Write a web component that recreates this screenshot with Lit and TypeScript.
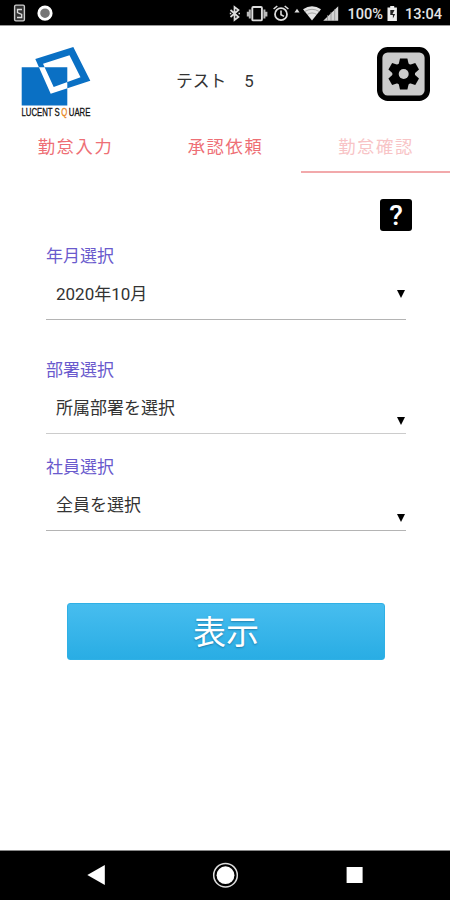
import { LitElement, html, svg, css } from "lit";
import { customElement, property } from "lit/decorators.js";

@customElement("status-bar")
class StatusBar extends LitElement {
  static styles = css`
    :host { display: flex; height: 25px; background: #000; color: #e8e8e8; border-bottom: 1px solid #999; box-sizing: content-box; flex: none; }
    svg { display: block; width: 450px; height: 25px; }
    text { font-family: Roboto, sans-serif; font-size: 15.2px; font-weight: 500; fill: #e4e4e4; }
  `;
  render() {
    return html`<svg viewBox="0 0 450 25">
      <rect x="14.6" y="5.1" width="9.8" height="15.8" rx="1.3" fill="#333" stroke="#ccc" stroke-width="1.4" />
      <path d="M22 9.5h-4.5v3l4.2 2v3H17" fill="none" stroke="#ddd" stroke-width="1.3" />
      <circle cx="45" cy="13.2" r="6.2" fill="#777" stroke="#fff" stroke-width="2.8" />
      <path d="M230.5 10l8 7-4 3V7l4 3-8 7M229.8 13.5h1.5M238.5 13.5h1.5" fill="none" stroke="#ddd" stroke-width="1.7" />
      <rect x="252.3" y="7" width="9.6" height="13.4" rx="1" fill="#000" stroke="#ddd" stroke-width="1.9" />
      <path d="M249.8 9.5v9M264.4 9.5v9M247.8 11.8v4.6M266.4 11.8v4.6" stroke="#bbb" stroke-width="2" />
      <circle cx="281" cy="14.2" r="6" fill="none" stroke="#ddd" stroke-width="1.8" />
      <path d="M281 10.5v4.2l3 1.7M273.6 9l3.7-3M288.4 9l-3.7-3" fill="none" stroke="#ddd" stroke-width="1.6" />
      <path d="M297 8.8l2.6 3.6h-5.2z" fill="#ddd" />
      <path d="M303 9.2Q312 3.4 321 9.2L312 20.6z" fill="#e4e4e4" />
      <path d="M304.6 11.6Q312 7 319.4 11.6M307 14.6Q312 11.3 317 14.6" fill="none" stroke="#888" stroke-width=".7" />
      <path d="M338.2 6.2v14.6h-15z" fill="#d4d4d4" />
      <path d="M327.5 15v6M331 12v9M334.7 9v12" stroke="#888" stroke-width=".7" />
      <text x="347.5" y="19.4" textLength="35.5" lengthAdjust="spacingAndGlyphs">100%</text>
      <path d="M387.5 7.6h2.7V6h4v1.6h2.7V21h-9.4z" fill="#eee" />
      <path d="M394.5 10h-4.2v5h2.6v3.4l2.2-4.4h-2.6z" fill="#222" />
      <text x="405" y="19.4" textLength="37" lengthAdjust="spacingAndGlyphs">13:04</text>
    </svg>`;
  }
}

@customElement("app-header")
class AppHeader extends LitElement {
  static styles = css`
    :host { display: flex; height: 95px; flex: none; align-items: flex-start; justify-content: space-between; padding: 0 20px 0 10px; box-sizing: border-box; }
    .logo { width: 100px; height: 85px; margin-top: 14px; display: block; }
    .name { font: 400 10.8px "Liberation Sans", sans-serif; fill: #111; stroke: #111; stroke-width: .3; }
    .accent { fill: #e8861c; stroke: #e8861c; }
    .title { flex: 1; margin: 41px 0 0 66px; font-size: 16.8px; line-height: 28px; color: #333; white-space: pre; }
    .title span { margin-left: 1px; }
    .gear { width: 53px; height: 54px; margin-top: 21px; display: block; }
  `;
  render() {
    return html`
      <svg class="logo" viewBox="0 0 100 85">
        <path fill="#0a70c4" fill-rule="evenodd"
          d="M11.7 27.3H57.3V65.6H11.7ZM25.3 19L63.3 7L80.3 40.7L40.7 53.7ZM33 23.8L59.5 15.2L70.5 37.3L43.7 47Z" />
        <text class="name" transform="translate(11.5 75.7) scale(.72 1)">LUCENT S</text>
        <text class="name accent" transform="translate(51.3 75.7) scale(.72 1)">Q</text>
        <text class="name" transform="translate(58.8 75.7) scale(.72 1)">UARE</text>
      </svg>
      <div class="title">テスト　<span>5</span></div>
      <svg class="gear" viewBox="0 0 53 54">
        <rect x="2.7" y="2.7" width="47.6" height="48.6" rx="8" fill="#cbcbcb" stroke="#000" stroke-width="5.4" />
        <g transform="translate(26.7 27)">
          ${[0, 60, 120].map((a) => svg`<path d="M-3.7 -15.5h7.4l1.6 7v17l-1.6 7h-7.4l-1.6-7v-17z" transform="rotate(${a})" />`)}
          <circle r="11.3" /><circle r="5" fill="#cbcbcb" />
        </g>
      </svg>`;
  }
}

@customElement("tab-strip")
class TabStrip extends LitElement {
  static styles = css`
    :host { display: grid; grid-template-columns: repeat(3, 1fr); height: 52px; flex: none; }
    .tab { text-align: center; font-size: 17.3px; letter-spacing: 1.6px; line-height: 28px; padding-top: 12px; padding-left: 1px; font-weight: 400; color: #ee6f75; box-sizing: border-box; border-bottom: 2px solid transparent; }
    .current { color: #f8c4c6; border-color: #f2a9ab; margin-left: 1px; padding-left: 1px; }
  `;
  render() {
    return html`${["勤怠入力", "承認依頼", "勤怠確認"].map((t, i) => html`<div class="tab ${i === 2 ? "current" : ""}">${t}</div>`)}`;
  }
}

@customElement("select-field")
class SelectField extends LitElement {
  @property() label = "";
  @property() value = "";
  static styles = css`
    :host { display: grid; grid-template-rows: 26px 1fr; box-sizing: border-box; border-bottom: 1px solid #b4b4b4; }
    .label { color: #6a5acd; font-size: 17px; line-height: 26px; }
    .row { display: flex; justify-content: space-between; padding: 12px 0 0 10px; }
    .value { color: #333; font-size: 17px; line-height: 26px; }
    .arrow { width: 9px; height: 8px; margin-top: 9px; }
    :host([low]) .arrow { margin-top: 22px; }
  `;
  render() {
    return html`<div class="label">${this.label}</div>
      <div class="row"><span class="value">${this.value}</span>
        <svg class="arrow" viewBox="0 0 9 8"><path d="M0 0h8L4 8z" /></svg></div>`;
  }
}

@customElement("nav-bar")
class NavBar extends LitElement {
  static styles = css`
    :host { display: block; height: 50px; flex: none; background: #000; border-top: 1px solid #888; box-sizing: border-box; }
    svg { display: block; width: 450px; height: 49px; }
  `;
  render() {
    return html`<svg viewBox="0 851 450 49" fill="#fff">
      <path d="M87.3 875L104.8 865V885z" />
      <circle cx="225.5" cy="875.2" r="11.8" fill="none" stroke="#ddd" stroke-width="1.5" />
      <circle cx="225.5" cy="875.2" r="8.9" />
      <rect x="346.6" y="867" width="16" height="16" />
    </svg>`;
  }
}

@customElement("app-root")
class AppRoot extends LitElement {
  static styles = css`
    :host { display: flex; flex-direction: column; width: 450px; height: 900px; background: #fff; overflow: hidden; font-family: Roboto, "Noto Sans CJK JP", sans-serif; }
    main { flex: 1; display: flex; flex-direction: column; padding: 26px 44px 0 46px; }
    .help { align-self: flex-end; width: 32px; height: 32px; margin-right: -6px; border-radius: 3px; background: #000; color: #fff; font: 500 28px/33px Roboto, sans-serif; text-align: center; }
    .month { height: 77px; margin-top: 12px; }
    .dept { height: 77px; margin-top: 37px; border-color: #ccc; }
    .staff { height: 77px; margin-top: 20px; }
    button { width: 318px; height: 57px; margin: 72px 0 0 21px; padding: 0; border: 1px solid #2fb0e5; border-radius: 3px; background: linear-gradient(#47bdef, #29ade4); color: #fff; font: 400 33px/54px "Noto Sans CJK JP", sans-serif; text-shadow: 0 1px 2px rgba(0, 60, 100, .45); }
    button span { display: block; height: 54px; margin-top: -4px; }
  `;
  render() {
    return html`
      <status-bar></status-bar>
      <app-header></app-header>
      <tab-strip></tab-strip>
      <main>
        <div class="help">?</div>
        <select-field class="month" label="年月選択" value="2020年10月"></select-field>
        <select-field class="dept" low label="部署選択" value="所属部署を選択"></select-field>
        <select-field class="staff" low label="社員選択" value="全員を選択"></select-field>
        <button><span>表示</span></button>
      </main>
      <nav-bar></nav-bar>`;
  }
}
